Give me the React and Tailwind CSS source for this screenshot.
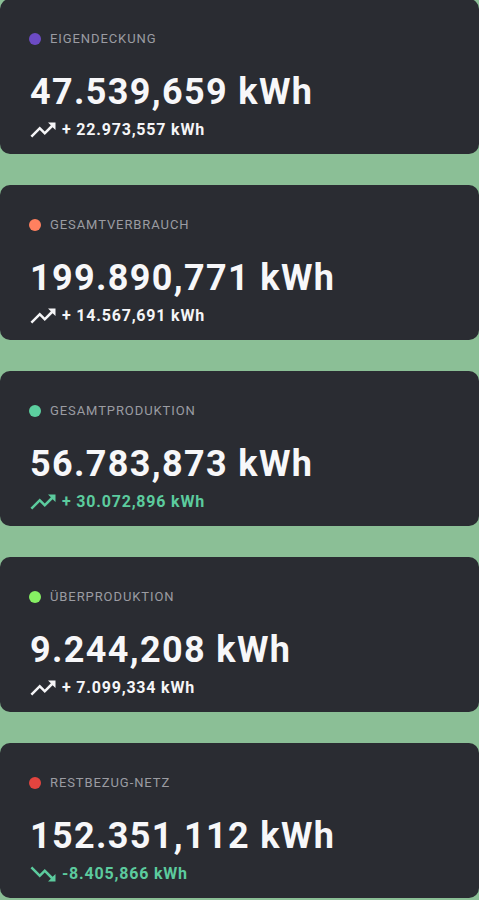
import { MdTrendingUp, MdTrendingDown } from "react-icons/md";

const STATS = [
  { label: "EIGENDECKUNG", dot: "bg-[#6c4bc4]", value: "47.539,659 kWh", delta: "+ 22.973,557 kWh", up: true, tone: "text-[#f5f5f7]" },
  { label: "GESAMTVERBRAUCH", dot: "bg-[#ff805f]", value: "199.890,771 kWh", delta: "+ 14.567,691 kWh", up: true, tone: "text-[#f5f5f7]" },
  { label: "GESAMTPRODUKTION", dot: "bg-[#5ccf9f]", value: "56.783,873 kWh", delta: "+ 30.072,896 kWh", up: true, tone: "text-[#5ccb9e]" },
  { label: "ÜBERPRODUKTION", dot: "bg-[#86ef63]", value: "9.244,208 kWh", delta: "+ 7.099,334 kWh", up: true, tone: "text-[#f5f5f7]" },
  { label: "RESTBEZUG-NETZ", dot: "bg-[#e3443f]", value: "152.351,112 kWh", delta: "-8.405,866 kWh", up: false, tone: "text-[#5ccb9e]" },
];

function StatCard({ stat }) {
  const Icon = stat.up ? MdTrendingUp : MdTrendingDown;
  return (
    <div className="h-[155px] rounded-[10px] bg-[#2a2c32] pl-[29px] pr-[30px] pt-[32px]">
      <div className="flex items-center gap-[9px] h-4">
        <span className={`w-[12px] h-[12px] rounded-full ${stat.dot}`} />
        <span className="text-[13px] leading-4 tracking-[0.07em] text-[#9b9ca2]">{stat.label}</span>
      </div>
      <p className="mt-[25px] ml-px text-[36px] leading-[40px] font-bold tracking-[0.0375em] text-[#f7f7f9]">{stat.value}</p>
      <div className={`mt-[3px] flex items-center h-[30px] ${stat.tone}`}>
        <Icon className="w-[30px] h-[30px] -ml-px shrink-0" />
        <span className="ml-[4px] text-[16px] leading-6 font-bold tracking-[0.05em]">{stat.delta}</span>
      </div>
    </div>
  );
}

export default function App() {
  return (
    <div className="min-h-[900px] bg-[#8bbf96] overflow-hidden" style={{ fontFamily: "Roboto, 'Liberation Sans', sans-serif" }}>
      <div className="-mt-px flex flex-col gap-[31px]">
        {STATS.map((s) => (
          <StatCard key={s.label} stat={s} />
        ))}
      </div>
    </div>
  );
}
